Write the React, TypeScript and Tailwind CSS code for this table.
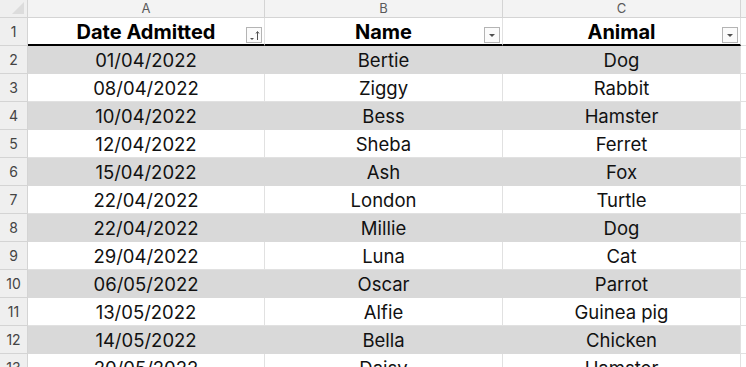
import React from "react";

const rows: [string, string, string][] = [
  ["01/04/2022", "Bertie", "Dog"],
  ["08/04/2022", "Ziggy", "Rabbit"],
  ["10/04/2022", "Bess", "Hamster"],
  ["12/04/2022", "Sheba", "Ferret"],
  ["15/04/2022", "Ash", "Fox"],
  ["22/04/2022", "London", "Turtle"],
  ["22/04/2022", "Millie", "Dog"],
  ["29/04/2022", "Luna", "Cat"],
  ["06/05/2022", "Oscar", "Parrot"],
  ["13/05/2022", "Alfie", "Guinea pig"],
  ["14/05/2022", "Bella", "Chicken"],
  ["20/05/2022", "Daisy", "Hamster"],
];

function DropBtn() {
  return (
    <div className="absolute right-[2px] top-[9px] w-[16px] h-[16px] border border-[#b4b4b4] bg-[#fbfbfb] box-border">
      <svg width="14" height="14" viewBox="0 0 14 14" className="block">
        <path d="M4 6 L10 6 L7 9 Z" fill="#505050" />
      </svg>
    </div>
  );
}

function SortBtn() {
  return (
    <div className="absolute right-[2px] top-[9px] w-[16px] h-[16px] border border-[#b4b4b4] bg-[#fbfbfb] box-border">
      <svg width="14" height="14" viewBox="0 0 14 14" className="block">
        <path d="M3 10 L7 10 L5 12 Z" fill="#505050" />
        <path d="M10.5 4 L10.5 12" stroke="#505050" strokeWidth="1" />
        <path d="M9 5.5 L10.5 3.5 L12 5.5" stroke="#505050" strokeWidth="1" fill="none" />
      </svg>
    </div>
  );
}

export default function App() {
  const font = { fontFamily: "Inter, 'Noto Sans', sans-serif" };
  return (
    <div className="w-[746px] h-[367px] overflow-hidden bg-white" style={font}>
      {/* Column header row */}
      <div className="flex h-[18px]">
        <div className="w-[28px] h-[18px] bg-[#efefef] border-r border-b border-[#d4d4d4] box-border relative">
          <svg width="14" height="14" viewBox="0 0 14 14" className="absolute right-[2px] top-[1px]">
            <path d="M13 1 L13 13 L1 13 Z" fill="#dcdcdc" />
          </svg>
        </div>
        {[["A", "w-[237px]"], ["B", "w-[238px]"], ["C", "w-[238px]"]].map(([l, w]) => (
          <div
            key={l}
            className={`${w} h-[18px] bg-[#f3f3f3] border-r border-b border-[#d4d4d4] box-border flex items-center justify-center text-[13px] leading-none text-[#5a5a5a]`}
          >
            {l}
          </div>
        ))}
        <div className="flex-1 h-[18px] bg-[#f3f3f3] border-b border-[#d4d4d4] box-border" />
      </div>

      {/* Row 1 - table header */}
      <div className="flex h-[28px]">
        <div className="w-[28px] h-[28px] bg-[#efefef] border-r border-b border-[#d4d4d4] box-border flex items-center justify-center text-[14px] text-[#444]">
          1
        </div>
        <div className="w-[237px] h-[28px] border-b-2 border-black border-r border-r-[#e1e1e1] box-border relative flex items-center justify-center pt-[2px] text-[20px] font-bold text-black">
          Date Admitted
          <SortBtn />
        </div>
        <div className="w-[238px] h-[28px] border-b-2 border-black border-r border-r-[#e1e1e1] box-border relative flex items-center justify-center pt-[2px] text-[20px] font-bold text-black">
          Name
          <DropBtn />
        </div>
        <div className="w-[238px] h-[28px] border-b-2 border-black border-r border-r-[#e1e1e1] box-border relative flex items-center justify-center pt-[2px] text-[20px] font-bold text-black">
          Animal
          <DropBtn />
        </div>
        <div className="flex-1 h-[28px] border-b border-[#e1e1e1] box-border" />
      </div>

      {rows.map((r, i) => {
        const gray = i % 2 === 0;
        const cell = gray
          ? "bg-[#d9d9d9] border-[#d9d9d9]"
          : "bg-white border-[#e1e1e1]";
        return (
          <div key={i} className="flex h-[28px]">
            <div className="w-[28px] h-[28px] bg-[#efefef] border-r border-b border-[#d4d4d4] box-border flex items-center justify-center text-[14px] text-[#444]">
              {i + 2}
            </div>
            <div className={`w-[237px] h-[28px] border-b border-r box-border ${cell} flex items-center justify-center pt-[2px] text-[18.5px] text-[#111]`}>
              {r[0]}
            </div>
            <div className={`w-[238px] h-[28px] border-b border-r box-border ${cell} flex items-center justify-center pt-[2px] text-[18.5px] text-[#111]`}>
              {r[1]}
            </div>
            <div className={`w-[237px] h-[28px] border-b box-border ${cell} flex items-center justify-center pt-[2px] text-[18.5px] text-[#111]`}>
              {r[2]}
            </div>
            <div className="w-[1px] h-[28px] bg-[#e1e1e1]" />
            <div className="flex-1 h-[28px] border-b border-[#e1e1e1] box-border" />
          </div>
        );
      })}
    </div>
  );
}
